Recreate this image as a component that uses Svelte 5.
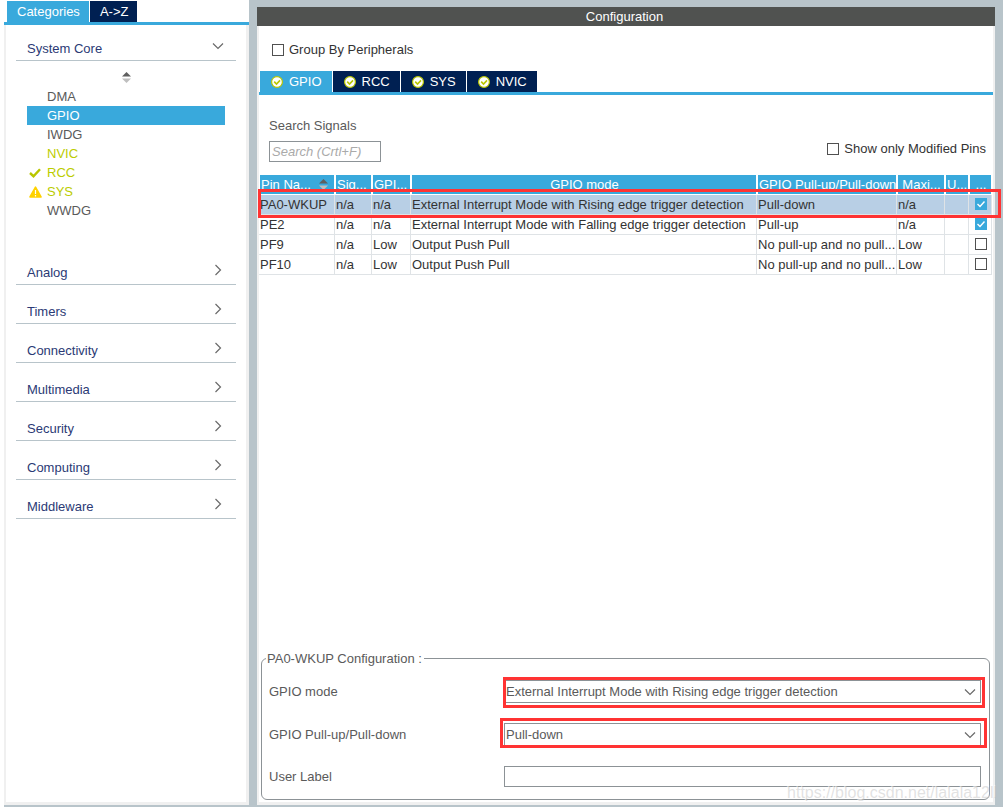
<script lang="ts">
  interface Peripheral {
    name: string;
    state?: 'used' | 'ok' | 'warning';
  }

  interface Pin {
    name: string;
    signal: string;
    level: string;
    mode: string;
    pull: string;
    speed: string;
    label: string;
    modified: boolean;
  }

  const peripherals: Peripheral[] = [
    { name: 'DMA' },
    { name: 'GPIO' },
    { name: 'IWDG' },
    { name: 'NVIC', state: 'used' },
    { name: 'RCC', state: 'ok' },
    { name: 'SYS', state: 'warning' },
    { name: 'WWDG' }
  ];

  const categories = ['Analog', 'Timers', 'Connectivity', 'Multimedia', 'Security', 'Computing', 'Middleware'];
  const tabs = ['GPIO', 'RCC', 'SYS', 'NVIC'];

  const rising = 'External Interrupt Mode with Rising edge trigger detection';
  const falling = 'External Interrupt Mode with Falling edge trigger detection';
  const noPull = 'No pull-up and no pull...';

  let pins: Pin[] = $state([
    { name: 'PA0-WKUP', signal: 'n/a', level: 'n/a', mode: rising, pull: 'Pull-down', speed: 'n/a', label: '', modified: true },
    { name: 'PE2', signal: 'n/a', level: 'n/a', mode: falling, pull: 'Pull-up', speed: 'n/a', label: '', modified: true },
    { name: 'PF9', signal: 'n/a', level: 'Low', mode: 'Output Push Pull', pull: noPull, speed: 'Low', label: '', modified: false },
    { name: 'PF10', signal: 'n/a', level: 'Low', mode: 'Output Push Pull', pull: noPull, speed: 'Low', label: '', modified: false }
  ]);

  let peripheral = $state('GPIO');
  let tab = $state('GPIO');
  let current = $state(0);
  const pin = $derived(pins[current]);
</script>

{#snippet chevron(dir: string)}
  <svg class="chevron {dir}" viewBox="0 0 12 12" aria-hidden="true">
    {#if dir === 'down'}
      <path d="M1 3.5 L6 8.5 L11 3.5" />
    {:else}
      <path d="M3.5 1 L8.5 6 L3.5 11" />
    {/if}
  </svg>
{/snippet}

{#snippet sorter()}
  <svg class="sorter" viewBox="0 0 9 11" aria-hidden="true">
    <path d="M0 4.5 L4.5 0 L9 4.5 Z" fill="#5f5f5f" />
    <path d="M0 6.5 L4.5 11 L9 6.5 Z" fill="#bfbfbf" />
  </svg>
{/snippet}

<div class="app">
  <aside class="sidebar">
    <div class="side-tabs">
      <button class="side-tab active">Categories</button>
      <button class="side-tab">A-&gt;Z</button>
    </div>

    <div class="side-body">
      <button class="category">
        <span>System Core</span>
        {@render chevron('down')}
      </button>

      <div class="tree">
        <button class="sort" aria-label="Sort">{@render sorter()}</button>
        <ul class="peripherals">
          {#each peripherals as p}
            <li>
              <button
                class="peripheral {p.state ?? ''}"
                class:selected={peripheral === p.name}
                onclick={() => (peripheral = p.name)}
              >
                <span class="state">
                  {#if p.state === 'ok'}
                    <svg width="12" height="10" viewBox="0 0 12 10" aria-hidden="true">
                      <path d="M1 5 L4.5 8.2 L11 1.2" fill="none" stroke="#b9c600" stroke-width="2.4" />
                    </svg>
                  {:else if p.state === 'warning'}
                    <svg width="13" height="12" viewBox="0 0 13 12" aria-hidden="true">
                      <path d="M6.5 1.2 L12 11 H1 Z" fill="#ffd200" stroke="#ffd200" stroke-width="1.6" stroke-linejoin="round" />
                      <path d="M6.5 4 V8 M6.5 9 V10.4" stroke="#fff" stroke-width="1.2" />
                    </svg>
                  {/if}
                </span>
                {p.name}
              </button>
            </li>
          {/each}
        </ul>
      </div>

      {#each categories as c}
        <button class="category">
          <span>{c}</span>
          {@render chevron('right')}
        </button>
      {/each}
    </div>
  </aside>

  <main class="config">
    <h1 class="title">Configuration</h1>

    <div class="panel">
      <label class="check group-by"><input type="checkbox" />Group By Peripherals</label>

      <div class="tabs">
        {#each tabs as t}
          <button class="tab" class:active={tab === t} onclick={() => (tab = t)}>
            <svg width="12" height="12" viewBox="0 0 12 12" aria-hidden="true">
              <circle cx="6" cy="6" r="5.4" fill="#fff" stroke="#b9c600" stroke-width="1.2" />
              <path d="M3.2 5.6 L5.5 8 L9 4.4" fill="none" stroke="#b9c600" stroke-width="1.6" />
            </svg>
            {t}
          </button>
        {/each}
      </div>

      <div class="search">
        <div class="search-field">
          <label for="search">Search Signals</label>
          <input id="search" type="text" placeholder="Search (Crtl+F)" />
        </div>
        <label class="check"><input type="checkbox" />Show only Modified Pins</label>
      </div>

      <div class="table-wrap">
        <table>
          <colgroup>
            <col class="w-name" />
            <col class="w-signal" />
            <col class="w-level" />
            <col />
            <col class="w-pull" />
            <col class="w-speed" />
            <col class="w-label" />
            <col class="w-modified" />
          </colgroup>
          <thead>
            <tr>
              <th>
                <div class="th-sort"><span>Pin Na...</span>{@render sorter()}</div>
              </th>
              <th>Sig...</th>
              <th>GPI...</th>
              <th class="center">GPIO mode</th>
              <th>GPIO Pull-up/Pull-down</th>
              <th class="center">Maxi...</th>
              <th>U...</th>
              <th class="center">...</th>
            </tr>
          </thead>
          <tbody>
            {#each pins as p, i}
              <tr class:selected={current === i} onclick={() => (current = i)}>
                <td>{p.name}</td>
                <td>{p.signal}</td>
                <td>{p.level}</td>
                <td>{p.mode}</td>
                <td>{p.pull}</td>
                <td>{p.speed}</td>
                <td>{p.label}</td>
                <td class="tick">
                  <input type="checkbox" aria-label="{p.name} modified" bind:checked={p.modified} />
                </td>
              </tr>
            {/each}
          </tbody>
        </table>
        <div class="mark mark-row"></div>
      </div>

      <fieldset>
        <legend>{pin.name} Configuration :</legend>

        <div class="field">
          <label for="mode">GPIO mode</label>
          <div class="control">
            <select id="mode" bind:value={pin.mode}>
              <option>{rising}</option>
              <option>{falling}</option>
              <option>Output Push Pull</option>
            </select>
            {@render chevron('down')}
            <div class="mark mark-mode"></div>
          </div>
        </div>

        <div class="field">
          <label for="pull">GPIO Pull-up/Pull-down</label>
          <div class="control">
            <select id="pull" bind:value={pin.pull}>
              <option>Pull-down</option>
              <option>Pull-up</option>
              <option>{noPull}</option>
            </select>
            {@render chevron('down')}
            <div class="mark mark-pull"></div>
          </div>
        </div>

        <div class="field">
          <label for="user-label">User Label</label>
          <div class="control">
            <input id="user-label" type="text" bind:value={pin.label} />
          </div>
        </div>
      </fieldset>
    </div>
  </main>

  <div class="watermark">https://blog.csdn.net/lalala12ll</div>
</div>

<style>
  :global(body) {
    background: #fff;
  }

  .app {
    --blue: #39a9dc;
    --navy: #002052;
    --steel: #b8c4ca;
    --edge: #f0f0f0;
    --line: #8c9296;
    --text: #5a5a5a;

    position: relative;
    display: flex;
    box-sizing: border-box;
    min-height: 100vh;
    padding: 0 2px 3px 4px;
    font-family: 'Liberation Sans', Arial, sans-serif;
    font-size: 13px;
    line-height: 19px;
    color: var(--text);
  }

  .app * {
    box-sizing: border-box;
  }

  button,
  input,
  select {
    font: inherit;
    color: inherit;
    margin: 0;
    border-radius: 0;
  }

  button {
    padding: 0;
    border: 0;
    background: none;
    text-align: left;
    cursor: pointer;
  }

  .chevron {
    width: 12px;
    height: 12px;
    fill: none;
    stroke: #6a6a6a;
    stroke-width: 1.2;
    flex-shrink: 0;
  }

  .sorter {
    display: block;
    width: 9px;
    height: 11px;
    flex-shrink: 0;
  }

  /* ---- Sidebar ---- */
  .sidebar {
    display: flex;
    flex-direction: column;
    width: 245px;
    flex-shrink: 0;
    border-bottom: 2px solid var(--steel);
  }

  .side-tabs {
    display: flex;
    gap: 1px;
    padding: 1px 0 0 3px;
    border-bottom: 3px solid var(--blue);
  }

  .side-tab {
    height: 21px;
    padding: 0 9px 0 10px;
    background: var(--navy);
    color: #fff;
  }

  .side-tab.active {
    background: var(--blue);
  }

  .side-body {
    flex: 1;
    padding: 0 10px;
    border: solid var(--edge);
    border-width: 0 3px 3px 2px;
  }

  .category {
    display: flex;
    align-items: flex-end;
    justify-content: space-between;
    width: 100%;
    height: 39px;
    padding: 0 12px 2px 11px;
    border-bottom: 1px solid var(--steel);
    color: #2b3a75;
  }

  .category:first-child {
    height: 36px;
  }

  .category .chevron {
    margin-bottom: 6px;
  }

  .tree {
    padding: 11px 11px 26px;
  }

  .sort {
    display: block;
    margin: 0 auto 4px;
  }

  .peripherals {
    margin: 0;
    padding: 0;
    list-style: none;
  }

  .peripheral {
    display: flex;
    align-items: center;
    width: 100%;
    height: 19px;
  }

  .state {
    display: flex;
    align-items: center;
    justify-content: center;
    width: 16px;
    height: 100%;
    margin-right: 4px;
  }

  .used,
  .ok,
  .warning {
    color: #bbcc00;
  }

  .peripheral.selected {
    background: var(--blue);
    color: #fff;
  }

  /* ---- Configuration pane ---- */
  .config {
    display: flex;
    flex-direction: column;
    flex: 1;
    min-width: 0;
    border: solid var(--steel);
    border-width: 7px 8px 2px;
  }

  .title {
    margin: 0;
    padding-right: 3px;
    background: #505250;
    color: #fff;
    font-size: 13px;
    font-weight: normal;
    text-align: center;
  }

  .panel {
    display: flex;
    flex-direction: column;
    flex: 1;
    border: solid var(--edge);
    border-width: 0 2px 3px;
  }

  .check {
    display: flex;
    align-items: center;
    gap: 5px;
    color: #333;
  }

  .group-by {
    padding: 14px 13px 12px;
  }

  input[type='checkbox'] {
    appearance: none;
    display: block;
    width: 12px;
    height: 12px;
    border: 1px solid #505050;
    background: #fff;
  }

  input[type='checkbox']:checked {
    border-color: var(--blue);
    background: var(--blue)
      url("data:image/svg+xml,%3Csvg xmlns='http://www.w3.org/2000/svg' viewBox='0 0 10 10'%3E%3Cpath d='M1.5 5 L4 7.5 L8.5 2.5' fill='none' stroke='white' stroke-width='1.4'/%3E%3C/svg%3E");
  }

  .tabs {
    display: flex;
    gap: 1px;
    padding-left: 1px;
    border-bottom: 3px solid var(--blue);
  }

  .tab {
    display: flex;
    align-items: center;
    gap: 6px;
    height: 21px;
    padding: 0 10px 0 11px;
    background: var(--navy);
    color: #fff;
  }

  .tab.active {
    background: var(--blue);
  }

  .search {
    display: flex;
    align-items: flex-end;
    justify-content: space-between;
    padding: 21px 7px 13px 10px;
  }

  .search .check {
    margin-bottom: 4px;
  }

  .search-field {
    display: flex;
    flex-direction: column;
    gap: 6px;
  }

  .search-field input {
    width: 112px;
    height: 21px;
    padding: 0 2px;
    border: 1px solid var(--line);
  }

  .search-field input::placeholder {
    color: #aaa;
    font-style: italic;
    opacity: 1;
  }

  /* ---- Pin table ---- */
  .table-wrap {
    position: relative;
    flex: 1;
    padding-right: 1px;
  }

  table {
    width: 100%;
    table-layout: fixed;
    border-collapse: separate;
    border-spacing: 0;
  }

  .w-name { width: 76px; }
  .w-signal { width: 37px; }
  .w-level { width: 39px; }
  .w-pull { width: 140px; }
  .w-speed { width: 48px; }
  .w-label { width: 24px; }
  .w-modified { width: 23px; }

  th,
  td {
    height: 20px;
    overflow: hidden;
    text-align: left;
    white-space: nowrap;
  }

  th {
    padding: 0 0 0 1px;
    border: solid #fff;
    border-width: 0 1px 1px;
    background: var(--blue);
    color: #fff;
    font-weight: normal;
  }

  th.center {
    text-align: center;
  }

  .th-sort {
    display: flex;
    align-items: center;
    gap: 8px;
  }

  td {
    padding: 0 0 0 1px;
    border: solid #dfe3e6;
    border-width: 0 1px 1px 0;
    color: #333;
  }

  tbody .selected {
    background: #b8cfe5;
  }

  .tick {
    padding-bottom: 1px;
  }

  .tick input {
    margin: 0 auto;
  }

  /* ---- Pin settings ---- */
  fieldset {
    margin: 0 3px 2px 2px;
    padding: 12px 8px 12px 7px;
    border: 1px solid var(--line);
    border-radius: 6px;
  }

  legend {
    margin-left: -3px;
    padding: 0 2px 0 1px;
  }

  .field {
    display: grid;
    grid-template-columns: 235px 1fr;
    align-items: center;
  }

  .field + .field {
    margin-top: 20px;
  }

  .control {
    position: relative;
  }

  select,
  .control input {
    appearance: none;
    display: block;
    width: 100%;
    height: 23px;
    padding: 0 1px;
    border: 1px solid var(--line);
    background: #fff;
  }

  .control input {
    height: 21px;
  }

  .control .chevron {
    position: absolute;
    top: 6px;
    right: 5px;
    pointer-events: none;
  }

  /* ---- Highlights ---- */
  .mark {
    position: absolute;
    border: 3px solid #ff3333;
    pointer-events: none;
  }

  .mark-row {
    top: 14px;
    right: -8px;
    left: -1px;
    height: 29px;
  }

  .mark-mode {
    inset: -3px -4px -5px -1px;
  }

  .mark-pull {
    inset: -5px -6px -2px -4px;
  }

  .watermark {
    position: absolute;
    right: 8px;
    bottom: 8px;
    font-size: 16px;
    color: rgba(190, 190, 190, 0.45);
    text-shadow: -1px -1px 0 rgba(255, 255, 255, 0.6);
    pointer-events: none;
  }
</style>
